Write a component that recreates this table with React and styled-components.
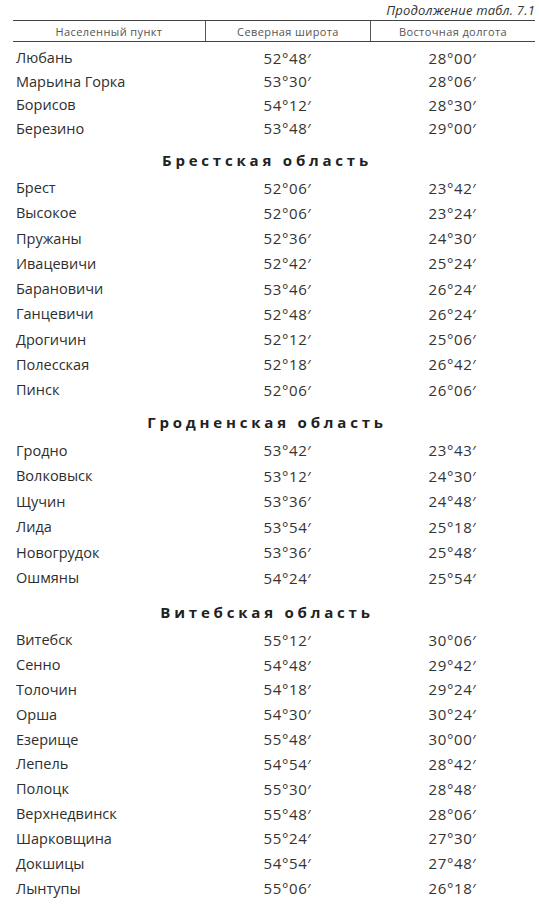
import React from "react";
import styled, { createGlobalStyle } from "styled-components";

const Global = createGlobalStyle`
  html, body { margin: 0; padding: 0; background: #ffffff; }
  body { font-family: "Open Sans", "Noto Sans", sans-serif; color: #2b2b2b; }
`;

const Page = styled.div`
  width: 539px;
  height: 906px;
  overflow: hidden;
  background: #fff;
  box-sizing: border-box;
  padding: 0 4px 0 13px;
`;

const Caption = styled.div`
  height: 20px;
  display: flex;
  align-items: center;
  justify-content: flex-end;
  font-style: italic;
  font-size: 13px;
  letter-spacing: 0.2px;
  color: #333;
`;

const HeaderRow = styled.div`
  display: grid;
  grid-template-columns: 192px 165px 1fr;
  height: 20px;
  border-top: 1px solid #444;
  border-bottom: 1px solid #444;
`;

const HeaderCell = styled.div`
  display: flex;
  align-items: center;
  justify-content: center;
  font-size: 11px;
  letter-spacing: 0.4px;
  color: #555;
  border-left: ${(p) => (p.$divider ? "1px solid #555" : "none")};
`;

const Body = styled.div`
  padding-top: 4px;
`;

const Row = styled.div`
  display: grid;
  grid-template-columns: 192px 165px 1fr;
  height: ${(p) => p.$pitch}px;
  align-items: center;
`;

const Name = styled.div`
  padding-left: 3px;
  font-size: 14.5px;
  color: #2e2e2e;
`;

const Value = styled.div`
  text-align: center;
  font-size: 15px;
  letter-spacing: 0.6px;
  color: #333;
`;

const SectionTitle = styled.div`
  height: ${(p) => 27 + p.$top}px;
  box-sizing: border-box;
  padding-top: ${(p) => p.$top}px;
  line-height: 24px;
  text-align: center;
  font-size: 15px;
  font-weight: 700;
  letter-spacing: 3.8px;
  color: #222;
  padding-right: 14px;
`;

const sections = [
  {
    title: null,
    pitch: 23.5,
    rows: [
      ["Любань", "52°48′", "28°00′"],
      ["Марьина Горка", "53°30′", "28°06′"],
      ["Борисов", "54°12′", "28°30′"],
      ["Березино", "53°48′", "29°00′"],
    ],
  },
  {
    title: "Брестская область",
    top: 8,
    pitch: 25.25,
    rows: [
      ["Брест", "52°06′", "23°42′"],
      ["Высокое", "52°06′", "23°24′"],
      ["Пружаны", "52°36′", "24°30′"],
      ["Ивацевичи", "52°42′", "25°24′"],
      ["Барановичи", "53°46′", "26°24′"],
      ["Ганцевичи", "52°48′", "26°24′"],
      ["Дрогичин", "52°12′", "25°06′"],
      ["Полесская", "52°18′", "26°42′"],
      ["Пинск", "52°06′", "26°06′"],
    ],
  },
  {
    title: "Гродненская область",
    top: 8,
    pitch: 25.5,
    rows: [
      ["Гродно", "53°42′", "23°43′"],
      ["Волковыск", "53°12′", "24°30′"],
      ["Щучин", "53°36′", "24°48′"],
      ["Лида", "53°54′", "25°18′"],
      ["Новогрудок", "53°36′", "25°48′"],
      ["Ошмяны", "54°24′", "25°54′"],
    ],
  },
  {
    title: "Витебская область",
    top: 10,
    pitch: 24.85,
    rows: [
      ["Витебск", "55°12′", "30°06′"],
      ["Сенно", "54°48′", "29°42′"],
      ["Толочин", "54°18′", "29°24′"],
      ["Орша", "54°30′", "30°24′"],
      ["Езерище", "55°48′", "30°00′"],
      ["Лепель", "54°54′", "28°42′"],
      ["Полоцк", "55°30′", "28°48′"],
      ["Верхнедвинск", "55°48′", "28°06′"],
      ["Шарковщина", "55°24′", "27°30′"],
      ["Докшицы", "54°54′", "27°48′"],
      ["Лынтупы", "55°06′", "26°18′"],
    ],
  },
];

export default function App() {
  return (
    <>
      <Global />
      <Page>
        <Caption>Продолжение табл. 7.1</Caption>
        <HeaderRow>
          <HeaderCell>Населенный пункт</HeaderCell>
          <HeaderCell $divider>Северная широта</HeaderCell>
          <HeaderCell $divider>Восточная долгота</HeaderCell>
        </HeaderRow>
        <Body>
          {sections.map((s, i) => (
            <React.Fragment key={i}>
              {s.title && <SectionTitle $top={s.top}>{s.title}</SectionTitle>}
              {s.rows.map((r) => (
                <Row key={r[0]} $pitch={s.pitch}>
                  <Name>{r[0]}</Name>
                  <Value>{r[1]}</Value>
                  <Value>{r[2]}</Value>
                </Row>
              ))}
            </React.Fragment>
          ))}
        </Body>
      </Page>
    </>
  );
}
